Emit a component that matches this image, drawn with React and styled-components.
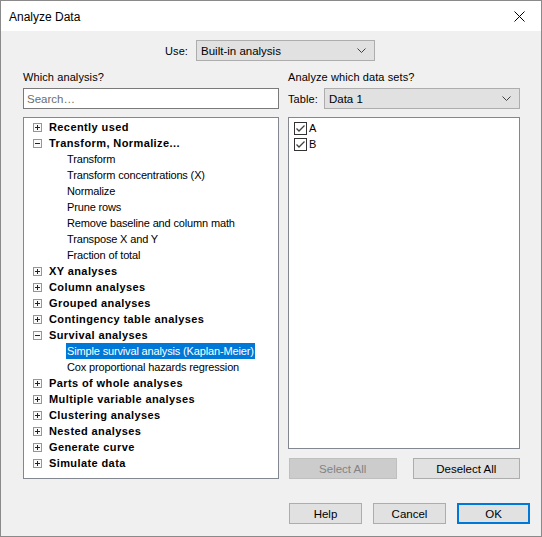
import React, { useState } from 'react';
import styled, { createGlobalStyle, css } from 'styled-components';

const GlobalStyle = createGlobalStyle`
  html, body {
    margin: 0;
    padding: 0;
    background: #ffffff;
  }
  * {
    box-sizing: border-box;
  }
`;

const uiFont = `"Liberation Sans", Arial, sans-serif`;

const groups = [
  { name: 'Recently used' },
  {
    name: 'Transform, Normalize...',
    open: true,
    items: [
      'Transform',
      'Transform concentrations (X)',
      'Normalize',
      'Prune rows',
      'Remove baseline and column math',
      'Transpose X and Y',
      'Fraction of total'
    ]
  },
  { name: 'XY analyses' },
  { name: 'Column analyses' },
  { name: 'Grouped analyses' },
  { name: 'Contingency table analyses' },
  {
    name: 'Survival analyses',
    open: true,
    items: ['Simple survival analysis (Kaplan-Meier)', 'Cox proportional hazards regression']
  },
  { name: 'Parts of whole analyses' },
  { name: 'Multiple variable analyses' },
  { name: 'Clustering analyses' },
  { name: 'Nested analyses' },
  { name: 'Generate curve' },
  { name: 'Simulate data' }
];

const Chevron = () => (
  <svg width="9" height="5" viewBox="0 0 9 5">
    <path d="M0.5 0.5 L4.5 4.5 L8.5 0.5" fill="none" stroke="#404040" strokeWidth="1" />
  </svg>
);

const CloseIcon = () => (
  <svg width="11" height="11" viewBox="0 0 11 11">
    <path d="M0.5 0.5 L10.5 10.5 M10.5 0.5 L0.5 10.5" stroke="#000" strokeWidth="1" />
  </svg>
);

const Expander = ({ open }) => (
  <ExpanderBox>
    <svg width="7" height="7" viewBox="0 0 7 7">
      <path d="M1 3.5 H6" stroke="#222" strokeWidth="1" />
      {!open && <path d="M3.5 1 V6" stroke="#222" strokeWidth="1" />}
    </svg>
  </ExpanderBox>
);

const CheckMark = () => (
  <svg width="11" height="11" viewBox="0 0 11 11">
    <path d="M1.5 5.5 L4 8 L9.5 2.5" fill="none" stroke="#404040" strokeWidth="1.3" />
  </svg>
);

export default function App() {
  const [selected, setSelected] = useState('Simple survival analysis (Kaplan-Meier)');
  const [checked, setChecked] = useState({ A: true, B: true });

  return (
    <>
      <GlobalStyle />
      <Window>
        <TitleBar>
          <Title>Analyze Data</Title>
          <CloseButton>
            <CloseIcon />
          </CloseButton>
        </TitleBar>
        <Body>
          <UseRow>
            <Label>Use:</Label>
            <Select $width={179}>
              <span>Built-in analysis</span>
              <Chevron />
            </Select>
          </UseRow>

          <Columns>
            <Column>
              <Heading>Which analysis?</Heading>
              <Search placeholder="Search…" />
              <Tree>
                {groups.map(g => (
                  <React.Fragment key={g.name}>
                    <GroupRow>
                      <Expander open={g.open} />
                      <GroupName>{g.name}</GroupName>
                    </GroupRow>
                    {g.open &&
                      g.items.map(item => (
                        <ItemRow key={item}>
                          <ItemName
                            $active={item === selected}
                            onClick={() => setSelected(item)}
                          >
                            {item}
                          </ItemName>
                        </ItemRow>
                      ))}
                  </React.Fragment>
                ))}
              </Tree>
            </Column>

            <Column>
              <Heading>Analyze which data sets?</Heading>
              <TableRow>
                <Label>Table:</Label>
                <Select $width={198}>
                  <span>Data 1</span>
                  <Chevron />
                </Select>
              </TableRow>
              <DataList>
                {['A', 'B'].map(k => (
                  <CheckRow
                    key={k}
                    onClick={() => setChecked({ ...checked, [k]: !checked[k] })}
                  >
                    <CheckBox>{checked[k] && <CheckMark />}</CheckBox>
                    <span>{k}</span>
                  </CheckRow>
                ))}
              </DataList>
              <ListButtons>
                <Button $width={108} disabled>
                  Select All
                </Button>
                <Button $width={108}>Deselect All</Button>
              </ListButtons>
            </Column>
          </Columns>

          <Footer>
            <Button $width={73}>Help</Button>
            <Button $width={73}>Cancel</Button>
            <Button $width={73} $default>
              OK
            </Button>
          </Footer>
        </Body>
      </Window>
    </>
  );
}

const Window = styled.div`
  width: 542px;
  height: 537px;
  border: 1px solid #8a8a8a;
  background: #f0f0f0;
  display: flex;
  flex-direction: column;
  font-family: ${uiFont};
  font-size: 11px;
  color: #000;
`;

const TitleBar = styled.div`
  height: 30px;
  background: #ffffff;
  display: flex;
  align-items: center;
  justify-content: space-between;
  padding-left: 8px;
`;

const Title = styled.div`
  font-size: 12px;
  padding-top: 1px;
`;

const CloseButton = styled.div`
  width: 46px;
  height: 30px;
  display: flex;
  align-items: center;
  justify-content: center;
  padding-left: 3px;
`;

const Body = styled.div`
  flex: 1;
  display: flex;
  flex-direction: column;
  padding: 9px 11px 0 22px;
`;

const UseRow = styled.div`
  display: flex;
  align-items: center;
  gap: 8px;
  height: 21px;
  padding-left: 142px;
`;

const Label = styled.span`
  font-size: 11px;
  letter-spacing: 0.1px;
`;

const Select = styled.div`
  width: ${p => p.$width}px;
  height: 21px;
  background: #e1e1e1;
  border: 1px solid #adadad;
  display: flex;
  align-items: center;
  justify-content: space-between;
  padding: 0 8px 0 4px;
  font-size: 11.5px;
`;

const Columns = styled.div`
  display: grid;
  grid-template-columns: 256px 232px;
  column-gap: 9px;
`;

const Column = styled.div`
  display: flex;
  flex-direction: column;
`;

const Heading = styled.div`
  height: 14px;
  line-height: 14px;
  margin: 9px 0 4px;
  letter-spacing: 0.1px;
`;

const Search = styled.input`
  width: 256px;
  height: 21px;
  border: 1px solid #7a7a7a;
  background: #fff;
  padding: 0 3px;
  font-family: ${uiFont};
  font-size: 11.5px;
  outline: none;
  &::placeholder {
    color: #6d6d6d;
  }
`;

const Tree = styled.div`
  margin-top: 8px;
  height: 362px;
  border: 1px solid #828790;
  background: #fff;
  padding: 1px 0 0 9px;
  font-size: 11px;
`;

const rowBase = css`
  height: 16px;
  display: flex;
  align-items: center;
`;

const GroupRow = styled.div`
  ${rowBase};
  gap: 7px;
`;

const ExpanderBox = styled.div`
  width: 9px;
  height: 9px;
  border: 1px solid #969696;
  display: flex;
  align-items: center;
  justify-content: center;
  background: #fafafa;
`;

const GroupName = styled.span`
  font-weight: bold;
  letter-spacing: 0.4px;
`;

const ItemRow = styled.div`
  ${rowBase};
  padding-left: 33px;
`;

const ItemName = styled.span`
  height: 16px;
  line-height: 16px;
  padding: 0 1px;
  letter-spacing: -0.15px;
  cursor: default;
  ${p =>
    p.$active &&
    css`
      background: #0078d7;
      color: #fff;
    `}
`;

const TableRow = styled.div`
  display: flex;
  align-items: center;
  gap: 6px;
  height: 21px;
`;

const DataList = styled.div`
  margin-top: 8px;
  height: 332px;
  border: 1px solid #828790;
  background: #fff;
  padding: 2px 0 0 5px;
`;

const CheckRow = styled.div`
  height: 16px;
  display: flex;
  align-items: center;
  gap: 2px;
  cursor: default;
`;

const CheckBox = styled.div`
  width: 13px;
  height: 13px;
  border: 1px solid #333;
  background: #fff;
  display: flex;
  align-items: center;
  justify-content: center;
`;

const ListButtons = styled.div`
  display: flex;
  gap: 16px;
  margin-top: 9px;
  padding-left: 1px;
`;

const Button = styled.button`
  width: ${p => p.$width}px;
  height: 21px;
  padding: 0;
  font-family: ${uiFont};
  font-size: 11.5px;
  color: #000;
  background: #e1e1e1;
  border: 1px solid #adadad;
  ${p =>
    p.$default &&
    css`
      border: 2px solid #0078d7;
    `}
  &:disabled {
    background: #cccccc;
    border-color: #bfbfbf;
    color: #838383;
  }
`;

const Footer = styled.div`
  display: flex;
  justify-content: flex-end;
  gap: 11px;
  margin-top: 24px;
  padding-right: 0;
`;
